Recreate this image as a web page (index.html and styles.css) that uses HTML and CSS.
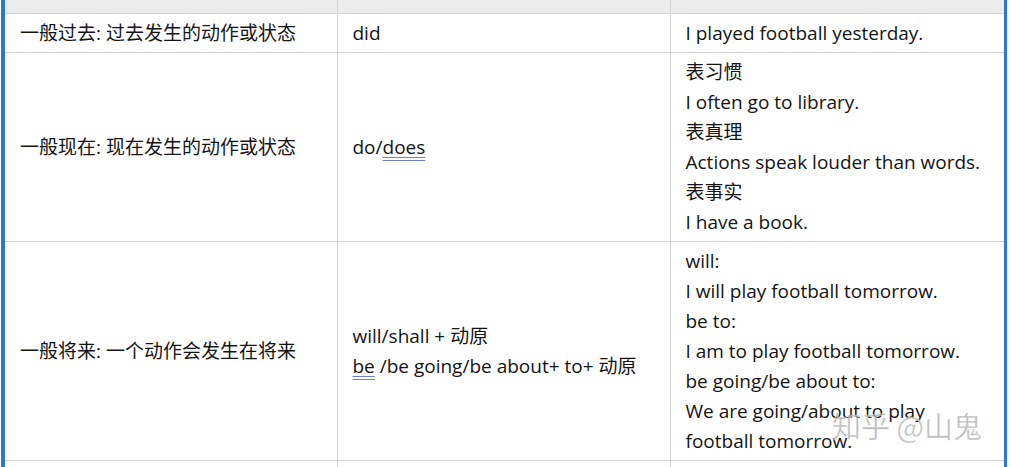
FILE: index.html
```html
<!DOCTYPE html>
<html lang="zh">
<head>
<meta charset="utf-8">
<link rel="stylesheet" href="styles.css">
</head>
<body>
<div class="frame">
  <table class="grammar">
    <colgroup>
      <col class="c1"><col class="c2"><col class="c3">
    </colgroup>
    <tr class="head"><td></td><td></td><td></td></tr>
    <tr>
      <td>一般过去: 过去发生的动作或状态</td>
      <td>did</td>
      <td>I played football yesterday.</td>
    </tr>
    <tr>
      <td>一般现在: 现在发生的动作或状态</td>
      <td>do/<span class="mark">does</span></td>
      <td>表习惯<br>I often go to library.<br>表真理<br>Actions speak louder than words.<br>表事实<br>I have a book.</td>
    </tr>
    <tr>
      <td>一般将来: 一个动作会发生在将来</td>
      <td>will/shall + 动原<br><span class="mark">be</span> /be going/be about+ to+ 动原</td>
      <td>will:<br>I will play football tomorrow.<br>be to:<br>I am to play football tomorrow.<br>be going/be about to:<br>We are going/about to play<br>football tomorrow.</td>
    </tr>
    <tr class="tail"><td></td><td></td><td></td></tr>
  </table>
  <div class="watermark">知乎 @山鬼</div>
</div>
</body>
</html>
```

FILE: styles.css
```css
html, body {
  margin: 0;
  padding: 0;
  background: #ffffff;
}
body {
  font-family: "Open Sans", "Noto Sans CJK SC", sans-serif;
  font-size: 19px;
  color: #141414;
}
.frame {
  position: relative;
  margin-left: 1px;
  width: 999px;
  border-left: 4px solid #2d78cf;
  border-right: 3px solid #2d78cf;
  height: 467px;
  overflow: hidden;
}
.grammar {
  border-collapse: collapse;
  table-layout: fixed;
  width: 999px;
}
.c1 { width: 332px; }
.c2 { width: 333px; }
.c3 { width: 334px; }
.grammar td {
  border: 1px solid #d3d3d3;
  padding: 4px 15px;
  line-height: 30px;
  vertical-align: middle;
  white-space: nowrap;
}
.grammar tr td:first-child { border-left: none; }
.grammar tr td:last-child { border-right: none; }
.grammar tr.head td {
  background: #ececec;
  height: 13px;
  padding: 0;
  border-top: none;
}
.grammar tr.tail td {
  height: 20px;
}
.mark {
  text-decoration: underline double #6f7fd6;
  text-underline-offset: 3px;
}
.watermark {
  position: absolute;
  left: 827px;
  top: 404px;
  font-family: "Noto Sans CJK SC", sans-serif;
  font-size: 29px;
  color: rgba(170, 170, 170, 0.75);
  -webkit-text-stroke: 0.5px rgba(255,255,255,0.6);
  white-space: nowrap;
}
```
